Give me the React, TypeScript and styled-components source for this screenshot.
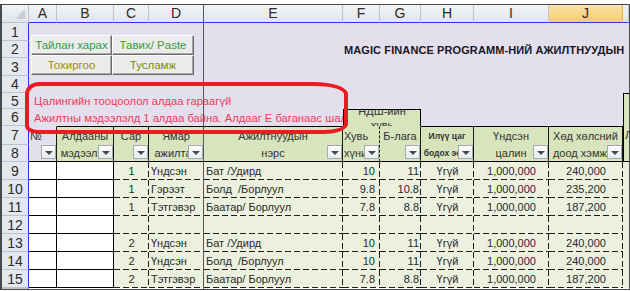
import { Fragment } from 'react';
import styled, { createGlobalStyle, css } from 'styled-components';

const GlobalStyle = createGlobalStyle`
  html, body { margin: 0; padding: 0; background: #ffffff; }
  body { font-family: "Liberation Sans", Arial, sans-serif; }
`;

type Align = 'left' | 'center' | 'right';

// K is only a sliver at the right edge, its letter is out of view
const LETTERS = ['A', 'B', 'C', 'D', 'E', 'F', 'G', 'H', 'I', 'J', ''];
const ROW_NUMBERS = Array.from({ length: 16 }, (_, i) => i + 1);

const HEADERS = [
    { col: 2, top: '№', bottom: '', topAlign: 'left' as Align, lavender: true },
    { col: 3, top: 'Алдааны', bottom: 'мэдээлэл' },
    { col: 4, top: 'Сар', bottom: '' },
    { col: 5, top: 'Ямар', bottom: 'ажилтан' },
    { col: 6, top: 'Ажилтнуудын', bottom: 'нэрс' },
    { col: 7, top: 'Хувь', bottom: 'хүний', topAlign: 'left' as Align, bottomAlign: 'left' as Align, open: true, dashed: true },
    { col: 8, top: 'Б-лага', bottom: '', open: true },
    { col: 9, top: 'Илүү цаг', bottom: 'бодох эсэх', small: true },
    { col: 10, top: 'Үндсэн', bottom: 'цалин' },
    { col: 11, top: 'Хөд хөлсний', bottom: 'доод хэмжээ' },
];

const ROWS = [
    { n: 9, month: '1', type: 'Үндсэн', name: 'Бат /Удирд', pct: '10', rate: '11', extra: 'Үгүй', salary: '1,000,000', min: '240,000' },
    { n: 10, month: '1', type: 'Гэрээт', name: 'Болд  /Борлуул', pct: '9.8', rate: '10.8', extra: 'Үгүй', salary: '1,000,000', min: '235,200' },
    { n: 11, month: '1', type: 'Тэтгэвэр', name: 'Баатар/ Борлуул', pct: '7.8', rate: '8.8', extra: 'Үгүй', salary: '1,000,000', min: '187,200' },
    { n: 12, month: '', type: '', name: '', pct: '', rate: '', extra: '', salary: '', min: '' },
    { n: 13, month: '2', type: 'Үндсэн', name: 'Бат /Удирд', pct: '10', rate: '11', extra: 'Үгүй', salary: '1,000,000', min: '240,000' },
    { n: 14, month: '2', type: 'Үндсэн', name: 'Болд  /Борлуул', pct: '10', rate: '11', extra: 'Үгүй', salary: '1,000,000', min: '240,000' },
    { n: 15, month: '2', type: 'Тэтгэвэр', name: 'Баатар/ Борлуул', pct: '7.8', rate: '8.8', extra: 'Үгүй', salary: '1,000,000', min: '187,200' },
];

const cellFont = css`
    font-family: "Liberation Sans", Arial, sans-serif;
    font-size: 11px;
`;

const dashedLines = css`
    background-color: #ebf1de;
    background-image:
        repeating-linear-gradient(90deg, #1c1c1c 0 6px, transparent 6px 9px),
        repeating-linear-gradient(180deg, #1c1c1c 0 6px, transparent 6px 9px);
    background-size: 100% 1px, 1px 100%;
    background-position: 0 100%, 100% 0;
    background-repeat: no-repeat;
`;

const App = () => {
    return (
        <>
            <GlobalStyle />
            <Frame>
                <Sheet>
                    <Corner />
                    { LETTERS.map((l, i) => (
                        <ColHead key={ i } $col={ i + 2 } $active={ l === 'J' }>{ l }</ColHead>
                    )) }
                    { ROW_NUMBERS.map(n => (
                        <RowHead key={ n } $row={ n + 1 }>{ n < 16 ? n : '' }</RowHead>
                    )) }

                    <Panel />
                    <ButtonGroup>
                        <SheetButton $tone='#2f9a4c'>Тайлан харах</SheetButton>
                        <SheetButton $tone='#3f9a36'>Тавих/ Paste</SheetButton>
                        <SheetButton $tone='#a08a08'>Тохиргоо</SheetButton>
                        <SheetButton $tone='#7e8c12'>Тусламж</SheetButton>
                    </ButtonGroup>
                    <Title>MAGIC FINANCE PROGRAMM-НИЙ АЖИЛТНУУДЫН</Title>
                    <Notice $row={ 6 }>Цалингийн тооцоолол алдаа гараагүй</Notice>
                    <Notice $row={ 7 }>Ажилтны мэдээлэлд 1 алдаа байна. Алдааг Е баганаас шалгана уу</Notice>

                    <GroupHead>НДШ-ийн<br />хувь</GroupHead>
                    <SideHead>Л</SideHead>

                    { HEADERS.map(h => (
                        <HeadCell key={ h.col } $col={ h.col } $lavender={ h.lavender } $open={ h.open } $dashed={ h.dashed }>
                            <HeadTop $align={ h.topAlign ?? 'center' } $small={ h.small }>{ h.top }</HeadTop>
                            <HeadBottom $align={ h.bottomAlign ?? 'center' } $small={ h.small }>
                                { h.bottom }
                                <DropButton />
                            </HeadBottom>
                        </HeadCell>
                    )) }

                    { ROWS.map(r => (
                        <Fragment key={ r.n }>
                            <Cell $row={ r.n + 1 } $col={ 2 } $solid />
                            <Cell $row={ r.n + 1 } $col={ 3 } $solid />
                            <Cell $row={ r.n + 1 } $col={ 4 } $align='center'>{ r.month }</Cell>
                            <Cell $row={ r.n + 1 } $col={ 5 }>{ r.type }</Cell>
                            <Cell $row={ r.n + 1 } $col={ 6 }>{ r.name }</Cell>
                            <Cell $row={ r.n + 1 } $col={ 7 } $align='right' $pad={ 5 }>{ r.pct }</Cell>
                            <Cell $row={ r.n + 1 } $col={ 8 } $align='right'>{ r.rate }</Cell>
                            <Cell $row={ r.n + 1 } $col={ 9 } $align='center'>{ r.extra }</Cell>
                            <Cell $row={ r.n + 1 } $col={ 10 } $align='center'>{ r.salary }</Cell>
                            <Cell $row={ r.n + 1 } $col={ 11 } $align='center'>{ r.min }</Cell>
                            <EdgeCell $row={ r.n + 1 } />
                        </Fragment>
                    )) }

                    <FreezeLine />
                </Sheet>
                <Annotation />
            </Frame>
        </>
    );
};

const Frame = styled.div`
    position: relative;
    margin-top: 4px;
    width: 630px;
    height: 286px;
    box-sizing: border-box;
    border: 1px solid #4a4a4a;
    border-left-width: 2px;
    overflow: hidden;
    background: #ffffff;
`;

const Sheet = styled.div`
    display: grid;
    grid-template-columns: 27px 28px 57px 35px 55px 139px 37px 41px 53px 75px 74px 1fr;
    grid-template-rows: 18px 18px 17px 18px 17px 16px 17px 19px 17px repeat(7, 18px) 1fr;
    height: 100%;
`;

const Corner = styled.div`
    grid-row: 1;
    grid-column: 1;
    position: relative;
    box-sizing: border-box;
    background: linear-gradient(#f1f3f6, #e1e5eb);
    border-right: 1px solid #bcc3cd;
    border-bottom: 1px solid #bcc3cd;

    &::after {
        content: '';
        position: absolute;
        right: 3px;
        bottom: 3px;
        border-left: 10px solid transparent;
        border-bottom: 10px solid #c9ced6;
    }
`;

const ColHead = styled.div<{ $col: number; $active?: boolean }>`
    grid-row: 1;
    grid-column: ${ p => p.$col };
    box-sizing: border-box;
    border-right: 1px solid ${ p => p.$active ? '#e9b14a' : '#bcc3cd' };
    border-bottom: 1px solid #2336f0;
    background: ${ p => p.$active ? 'linear-gradient(#fbe3a6, #f6cd6c)' : 'linear-gradient(#f1f3f6, #e1e5eb)' };
    font-family: "Liberation Sans", Arial, sans-serif;
    font-size: 14px;
    line-height: 17px;
    color: #2b2b2b;
    text-align: center;
    overflow: hidden;
`;

const RowHead = styled.div<{ $row: number }>`
    grid-column: 1;
    grid-row: ${ p => p.$row };
    box-sizing: border-box;
    display: flex;
    align-items: center;
    justify-content: center;
    border-right: 1px solid #2336f0;
    border-bottom: 1px solid #bcc3cd;
    background: #e4e8ee;
    font-family: "Liberation Sans", Arial, sans-serif;
    font-size: 14px;
    color: #2b2b2b;
    overflow: hidden;
`;

const Panel = styled.div`
    grid-row: 2 / 8;
    grid-column: 2 / 13;
    background: #e4dfec;
`;

const ButtonGroup = styled.div`
    grid-row: 2 / 6;
    grid-column: 2 / 6;
    display: grid;
    grid-template-columns: 81px 82px;
    grid-template-rows: 20px 20px;
    align-content: start;
    padding: 12px 0 0 2px;
`;

const SheetButton = styled.button<{ $tone: string }>`
    margin: 0;
    padding: 0;
    box-sizing: border-box;
    background: #ececec;
    border: 1px solid;
    border-color: #ffffff #6c6c6c #6c6c6c #ffffff;
    box-shadow: inset -1px -1px 0 #a9a9a9;
    font-family: "Liberation Sans", Arial, sans-serif;
    font-size: 11.5px;
    color: ${ p => p.$tone };
    white-space: nowrap;
`;

const Title = styled.div`
    grid-row: 3;
    grid-column: 7 / 13;
    align-self: end;
    padding: 0 0 1px 1px;
    font-family: "Liberation Sans", Arial, sans-serif;
    font-size: 11px;
    line-height: 13px;
    font-weight: bold;
    letter-spacing: 0.1px;
    color: #14182a;
    white-space: nowrap;
`;

const Notice = styled.div<{ $row: number }>`
    grid-row: ${ p => p.$row };
    grid-column: 2 / 7;
    display: flex;
    align-items: center;
    padding-left: 5px;
    ${ cellFont };
    font-size: 11.2px;
    color: #ec3a5a;
    white-space: nowrap;
    overflow: hidden;
`;

const GroupHead = styled.div`
    grid-row: 7;
    grid-column: 7 / 9;
    display: flex;
    align-items: center;
    justify-content: center;
    box-sizing: border-box;
    border: 1px solid #000000;
    border-bottom: none;
    background: #d8e4bc;
    ${ cellFont };
    line-height: 14px;
    color: #333333;
    text-align: center;
    overflow: hidden;
`;

const SideHead = styled.div`
    grid-row: 6 / 10;
    grid-column: 12;
    box-sizing: border-box;
    border-top: 1px solid #000000;
    border-left: 1px solid #000000;
    border-bottom: 1px solid #000000;
    background: #d8e4bc;
    padding: 35px 0 0 1px;
    ${ cellFont };
    color: #333333;
    overflow: hidden;
`;

const HeadCell = styled.div<{ $col: number; $lavender?: boolean; $open?: boolean; $dashed?: boolean }>`
    grid-row: 8 / 10;
    grid-column: ${ p => p.$col };
    display: flex;
    flex-direction: column;
    box-sizing: border-box;
    background: ${ p => p.$lavender ? '#e4dfec' : '#d8e4bc' };
    border-top: 1px solid ${ p => p.$lavender || p.$open ? 'transparent' : '#000000' };
    border-right: 1px ${ p => p.$dashed ? 'dashed' : 'solid' } #1a1a1a;
    border-bottom: 1px solid #000000;
    color: #333333;
    overflow: hidden;
`;

const HeadTop = styled.div<{ $align: Align; $small?: boolean }>`
    height: 18px;
    padding: 0 1px;
    ${ cellFont };
    font-size: ${ p => p.$small ? '8.5px' : '11px' };
    font-weight: ${ p => p.$small ? 'bold' : 'normal' };
    line-height: 18px;
    text-align: ${ p => p.$align };
    white-space: nowrap;
`;

const HeadBottom = styled.div<{ $align: Align; $small?: boolean }>`
    position: relative;
    height: 16px;
    padding: 0 1px;
    ${ cellFont };
    font-size: ${ p => p.$small ? '8.5px' : '11px' };
    font-weight: ${ p => p.$small ? 'bold' : 'normal' };
    line-height: 16px;
    text-align: ${ p => p.$align };
    white-space: nowrap;
`;

const DropButton = styled.span`
    position: absolute;
    right: 0;
    top: 0;
    width: 15px;
    height: 14px;
    box-sizing: border-box;
    border: 1px solid #a3aab3;
    background: linear-gradient(#ffffff, #e8eaed);

    &::after {
        content: '';
        position: absolute;
        left: 3px;
        top: 5px;
        border-left: 4px solid transparent;
        border-right: 4px solid transparent;
        border-top: 4px solid #4a4a4a;
    }
`;

const Cell = styled.div<{ $row: number; $col: number; $solid?: boolean; $align?: Align; $pad?: number }>`
    grid-row: ${ p => p.$row };
    grid-column: ${ p => p.$col };
    box-sizing: border-box;
    padding: 2px ${ p => p.$pad ?? 2 }px 0 2px;
    ${ cellFont };
    line-height: 15px;
    color: #2a2a2a;
    text-align: ${ p => p.$align ?? 'left' };
    white-space: pre;
    overflow: hidden;
    ${ p => p.$solid ? css`
        background: #ffffff;
        border-right: 1px solid #000000;
        border-bottom: 1px solid #000000;
    ` : dashedLines };
`;

const EdgeCell = styled.div<{ $row: number }>`
    grid-row: ${ p => p.$row };
    grid-column: 12;
    background: #ebf1de;
`;

const FreezeLine = styled.div`
    grid-row: 1 / -1;
    grid-column: 5;
    justify-self: end;
    width: 1px;
    background: #585858;
    z-index: 2;
`;

const Annotation = styled.div`
    position: absolute;
    left: 23px;
    top: 77px;
    width: 323px;
    height: 52px;
    box-sizing: border-box;
    border: 4px solid #e91c24;
    border-radius: 14px 34px 24px 14px / 12px 12px 10px 8px;
    pointer-events: none;
    z-index: 5;
`;

export default App;
